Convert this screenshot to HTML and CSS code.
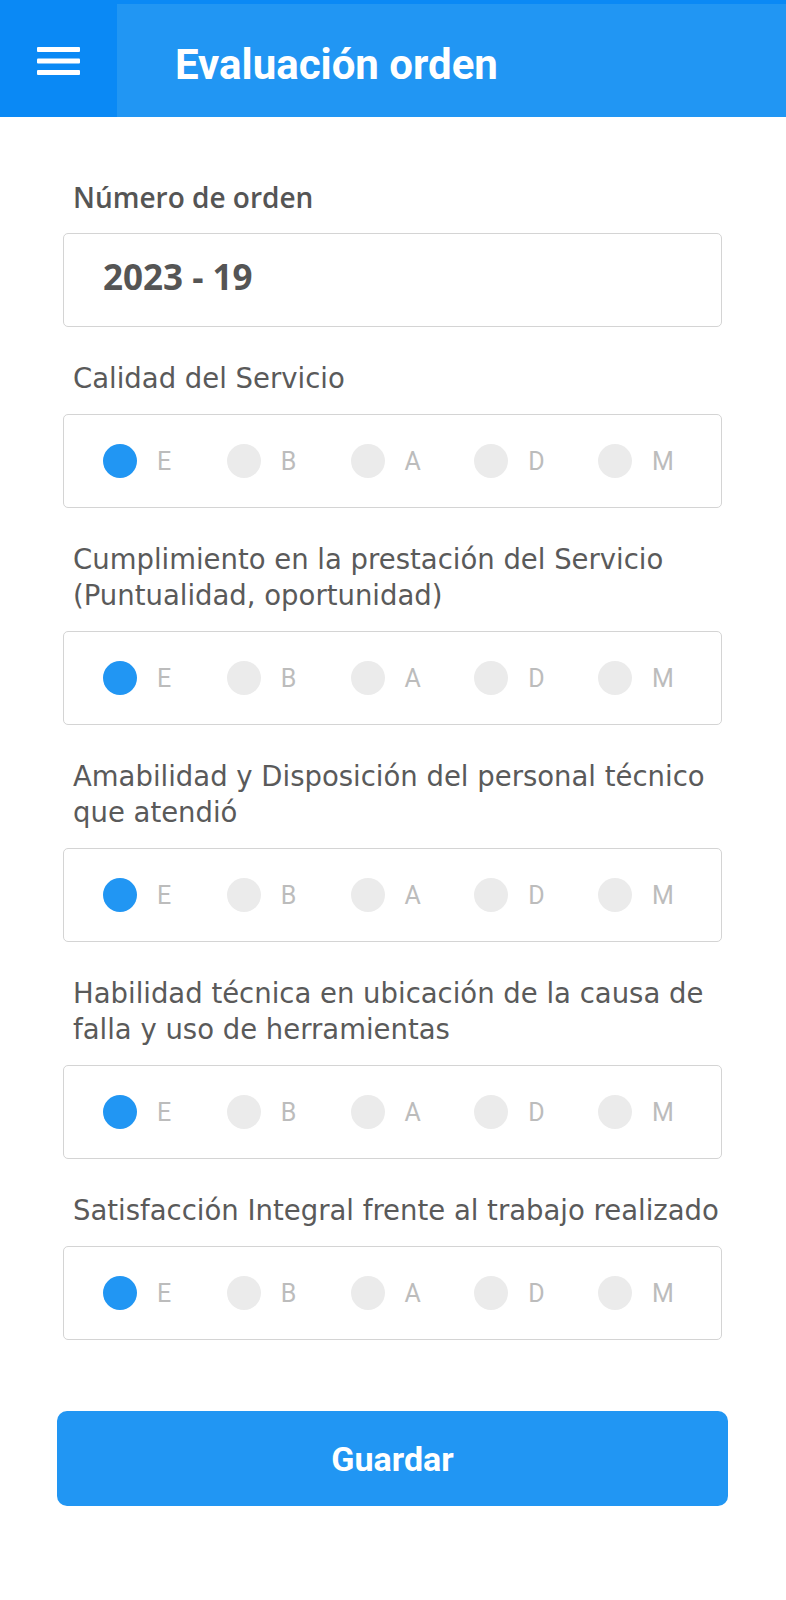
FILE: index.html
```html
<!DOCTYPE html>
<html lang="es">
<head>
<meta charset="utf-8">
<title>Evaluación orden</title>
<link rel="stylesheet" href="styles.css">
</head>
<body>
<header class="appbar">
  <div class="menu-btn">
    <svg class="menu-icon" width="43" height="30" viewBox="0 0 43 30" aria-hidden="true">
      <rect x="0" y="1" width="43" height="5" rx="1" fill="#fff"/>
      <rect x="0" y="12.5" width="43" height="5" rx="1" fill="#fff"/>
      <rect x="0" y="24" width="43" height="5" rx="1" fill="#fff"/>
    </svg>
  </div>
  <div class="appbar-title">
    <h1 class="title">Evaluación orden</h1>
  </div>
</header>

<main class="form">
  <div class="field">
    <div class="label label-strong">Número de orden</div>
    <div class="input-box"><span class="input-value">2023 - 19</span></div>
  </div>

  <div class="field">
    <div class="label">Calidad del Servicio</div>
    <div class="radio-box">
      <div class="radio-item"><span class="dot dot-on"></span><span class="radio-text">E</span></div>
      <div class="radio-item"><span class="dot"></span><span class="radio-text">B</span></div>
      <div class="radio-item"><span class="dot"></span><span class="radio-text">A</span></div>
      <div class="radio-item"><span class="dot"></span><span class="radio-text">D</span></div>
      <div class="radio-item"><span class="dot"></span><span class="radio-text">M</span></div>
    </div>
  </div>

  <div class="field">
    <div class="label">Cumplimiento en la prestación del Servicio<br>(Puntualidad, oportunidad)</div>
    <div class="radio-box">
      <div class="radio-item"><span class="dot dot-on"></span><span class="radio-text">E</span></div>
      <div class="radio-item"><span class="dot"></span><span class="radio-text">B</span></div>
      <div class="radio-item"><span class="dot"></span><span class="radio-text">A</span></div>
      <div class="radio-item"><span class="dot"></span><span class="radio-text">D</span></div>
      <div class="radio-item"><span class="dot"></span><span class="radio-text">M</span></div>
    </div>
  </div>

  <div class="field">
    <div class="label">Amabilidad y Disposición del personal técnico<br>que atendió</div>
    <div class="radio-box">
      <div class="radio-item"><span class="dot dot-on"></span><span class="radio-text">E</span></div>
      <div class="radio-item"><span class="dot"></span><span class="radio-text">B</span></div>
      <div class="radio-item"><span class="dot"></span><span class="radio-text">A</span></div>
      <div class="radio-item"><span class="dot"></span><span class="radio-text">D</span></div>
      <div class="radio-item"><span class="dot"></span><span class="radio-text">M</span></div>
    </div>
  </div>

  <div class="field">
    <div class="label">Habilidad técnica en ubicación de la causa de<br>falla y uso de herramientas</div>
    <div class="radio-box">
      <div class="radio-item"><span class="dot dot-on"></span><span class="radio-text">E</span></div>
      <div class="radio-item"><span class="dot"></span><span class="radio-text">B</span></div>
      <div class="radio-item"><span class="dot"></span><span class="radio-text">A</span></div>
      <div class="radio-item"><span class="dot"></span><span class="radio-text">D</span></div>
      <div class="radio-item"><span class="dot"></span><span class="radio-text">M</span></div>
    </div>
  </div>

  <div class="field">
    <div class="label">Satisfacción Integral frente al trabajo realizado</div>
    <div class="radio-box">
      <div class="radio-item"><span class="dot dot-on"></span><span class="radio-text">E</span></div>
      <div class="radio-item"><span class="dot"></span><span class="radio-text">B</span></div>
      <div class="radio-item"><span class="dot"></span><span class="radio-text">A</span></div>
      <div class="radio-item"><span class="dot"></span><span class="radio-text">D</span></div>
      <div class="radio-item"><span class="dot"></span><span class="radio-text">M</span></div>
    </div>
  </div>

  <button class="save-btn" type="button">Guardar</button>
</main>
</body>
</html>
```

FILE: styles.css
```css
html, body {
  margin: 0;
  padding: 0;
  background: #ffffff;
}

body {
  font-family: "DejaVu Sans", "Open Sans", sans-serif;
  color: #585858;
}

/* ---------- App bar ---------- */
.appbar {
  display: flex;
  height: 117px;
}

.menu-btn {
  flex: none;
  width: 117px;
  box-sizing: border-box;
  padding-top: 4px;
  background: #0a89f5;
  display: flex;
  align-items: center;
  justify-content: center;
}

.menu-icon {
  display: block;
}

.appbar-title {
  flex: 1;
  box-sizing: border-box;
  background: #2196f3;
  border-top: 4px solid #0a89f5;
  padding: 8px 0 0 58px;
  display: flex;
  align-items: center;
}

.title {
  margin: 0;
  font-family: Roboto, "Liberation Sans", sans-serif;
  font-weight: 700;
  font-size: 42px;
  line-height: 1;
  color: #ffffff;
}

/* ---------- Form ---------- */
.form {
  padding: 62px 64px 60px 63px;
}

.field + .field {
  margin-top: 33px;
}

.label {
  padding: 0 10px;
  margin-bottom: 18px;
  font-family: "DejaVu Sans", sans-serif;
  font-size: 27.5px;
  line-height: 36px;
  color: #5a5a5a;
  white-space: nowrap;
}

.label-strong {
  font-family: "Open Sans", "DejaVu Sans", sans-serif;
  font-weight: 600;
  font-size: 28px;
  color: #555555;
}

.input-box {
  box-sizing: border-box;
  height: 94px;
  border: 1px solid #d4d4d4;
  border-radius: 5px;
  padding: 0 0 8px 39px;
  display: flex;
  align-items: center;
}

.input-value {
  font-family: "Open Sans", sans-serif;
  font-weight: 700;
  font-size: 35px;
  line-height: 1;
  color: #555555;
}

.radio-box {
  box-sizing: border-box;
  height: 94px;
  border: 1px solid #d4d4d4;
  border-radius: 5px;
  padding-left: 39px;
  display: flex;
  align-items: center;
}

.radio-item {
  flex: none;
  width: 123.75px;
  display: flex;
  align-items: center;
  gap: 20px;
}

.dot {
  flex: none;
  width: 34px;
  height: 34px;
  border-radius: 50%;
  background: #ebebeb;
}

.dot-on {
  background: #2196f3;
}

.radio-text {
  font-family: Roboto, "Liberation Sans", sans-serif;
  font-weight: 400;
  font-size: 25px;
  line-height: 1;
  color: #bcbcbc;
}

/* ---------- Button ---------- */
.save-btn {
  display: block;
  box-sizing: border-box;
  width: calc(100% + 12px);
  height: 95px;
  margin: 71px -6px 0;
  border: 0;
  border-radius: 10px;
  background: #2196f3;
  color: #ffffff;
  font-family: Roboto, "Liberation Sans", sans-serif;
  font-weight: 700;
  font-size: 34px;
  cursor: pointer;
}
```
